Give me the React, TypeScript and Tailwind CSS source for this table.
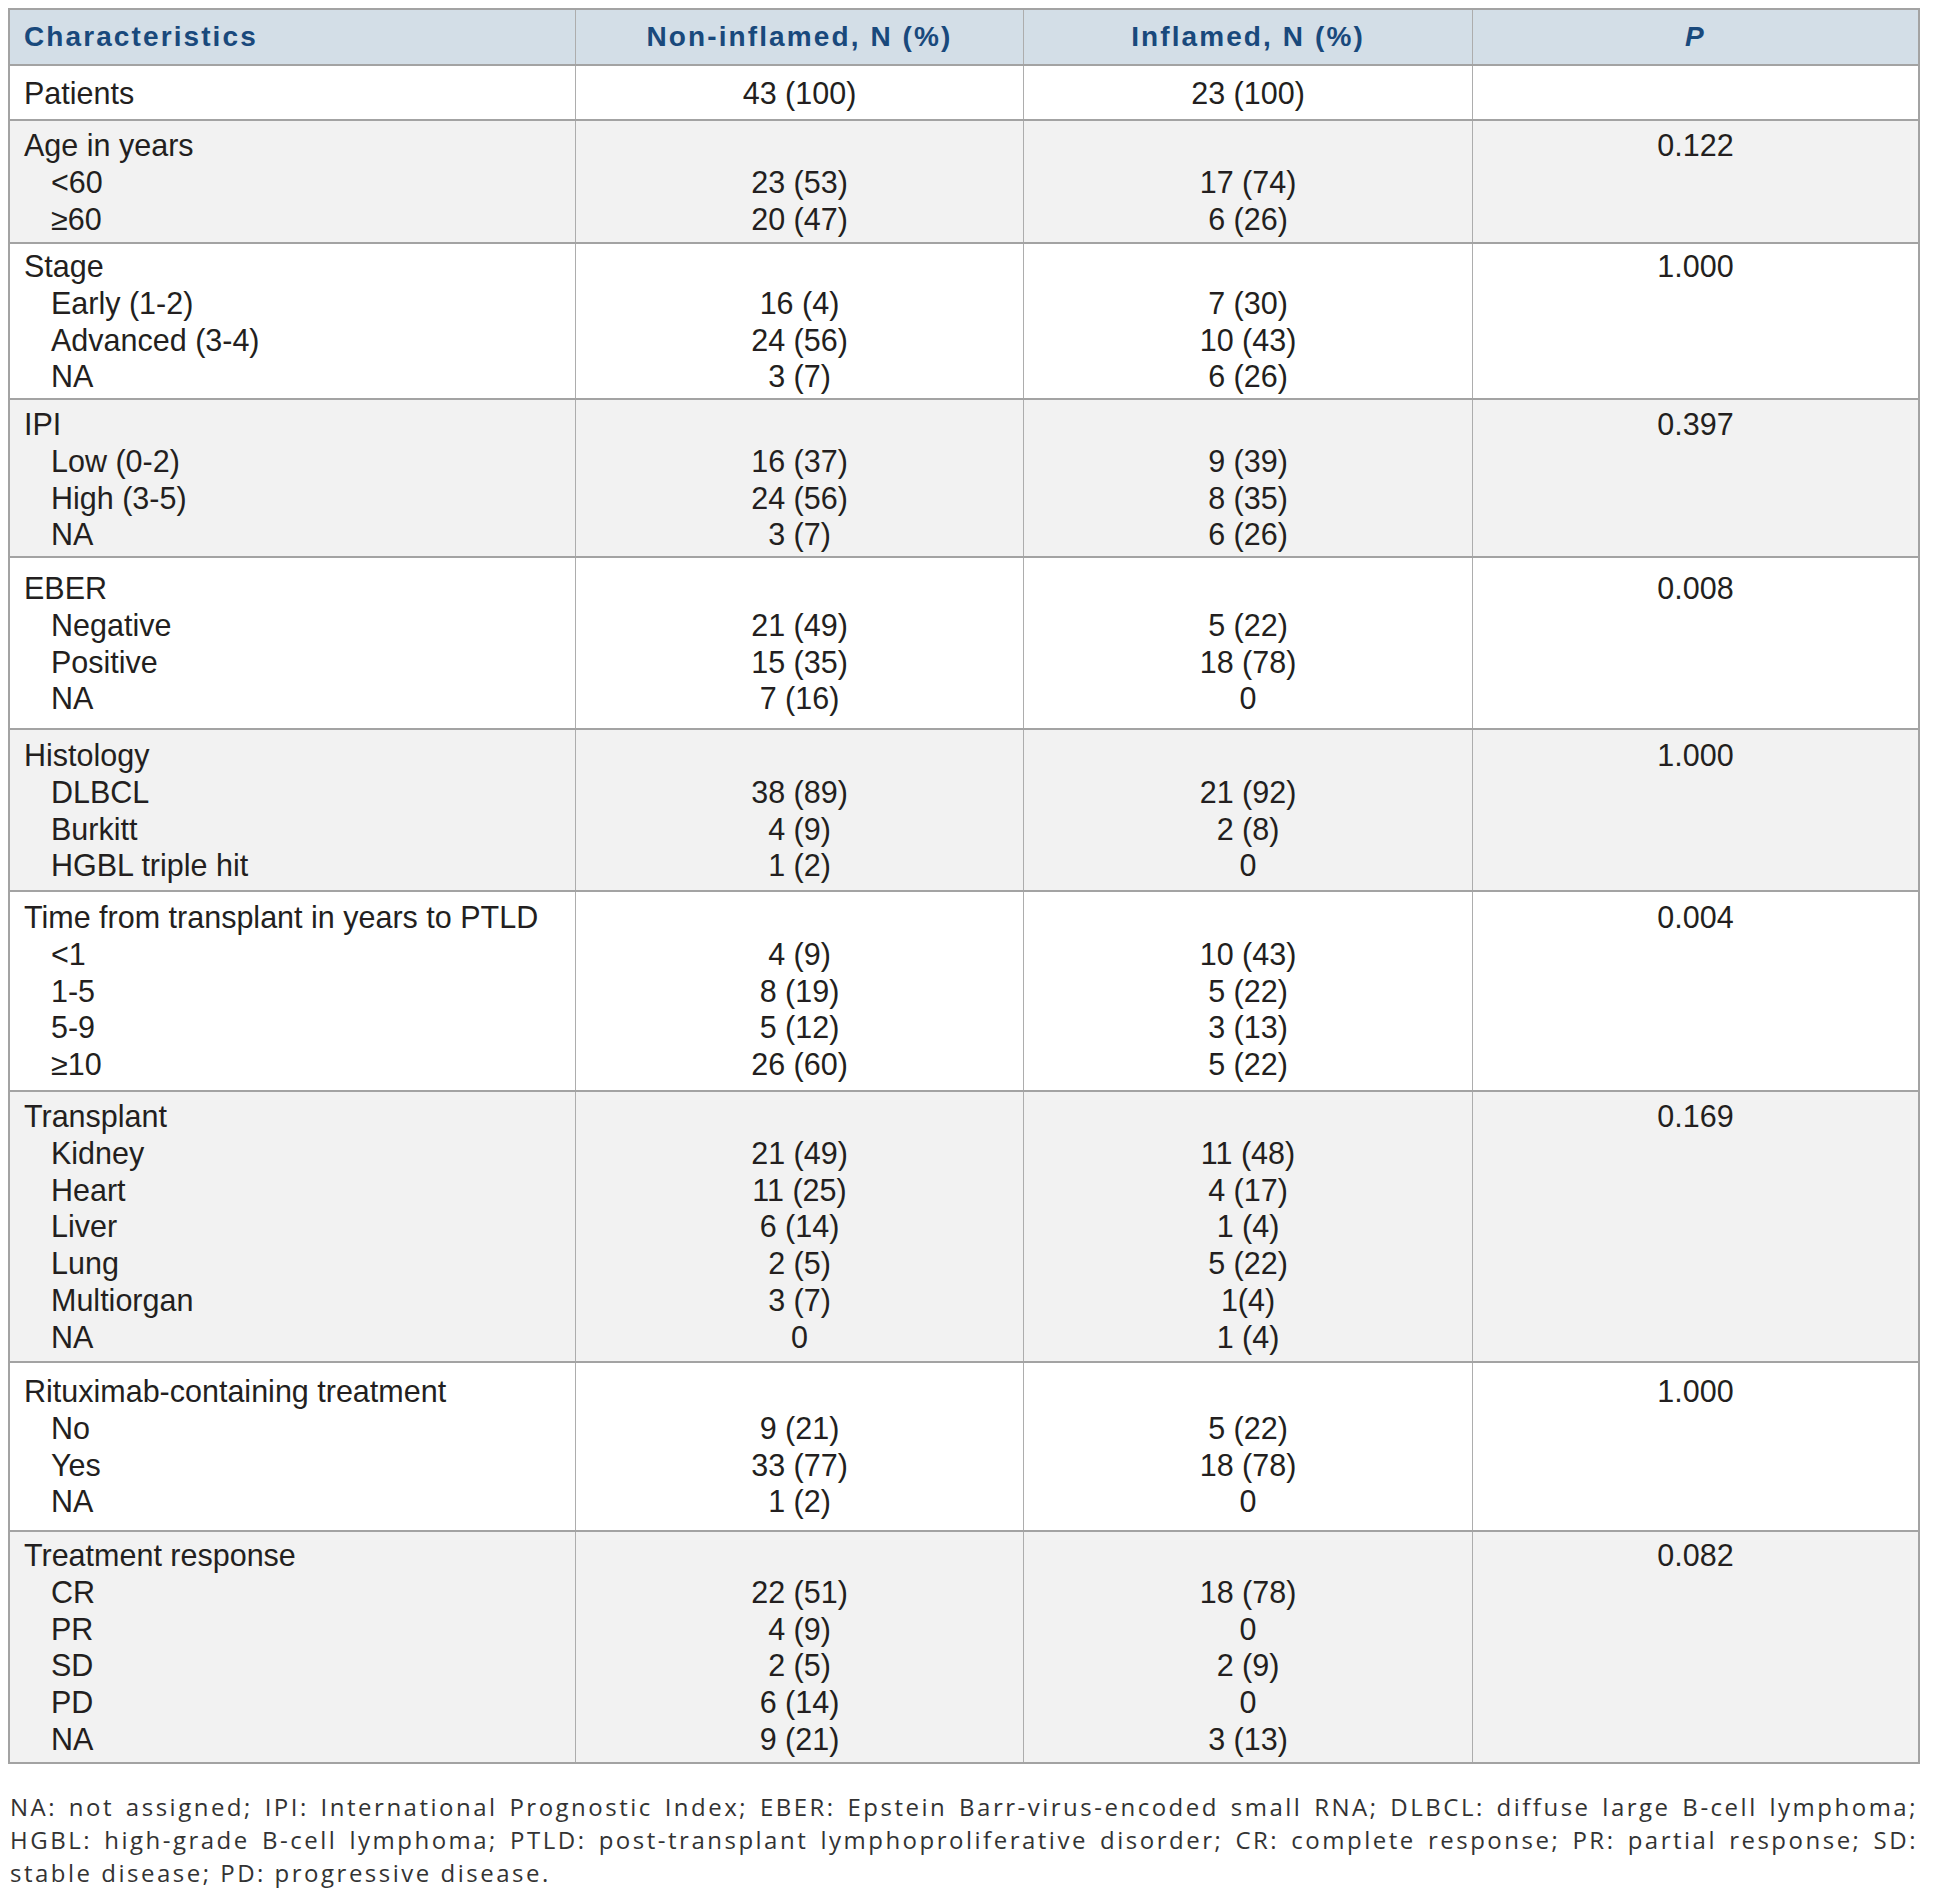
import React from 'react';

type Row = {
  label: string;
  subs: string[];
  a: string[];
  b: string[];
  p: string;
  h: number;
  pt: number;
};

const rows: Row[] = [
  { label: 'Patients', subs: [], a: ['43 (100)'], b: ['23 (100)'], p: '', h: 55, pt: 9 },
  { label: 'Age in years', subs: ['<60', '≥60'], a: ['23 (53)', '20 (47)'], b: ['17 (74)', '6 (26)'], p: '0.122', h: 123, pt: 6 },
  { label: 'Stage', subs: ['Early (1-2)', 'Advanced (3-4)', 'NA'], a: ['16 (4)', '24 (56)', '3 (7)'], b: ['7 (30)', '10 (43)', '6 (26)'], p: '1.000', h: 156, pt: 4 },
  { label: 'IPI', subs: ['Low (0-2)', 'High (3-5)', 'NA'], a: ['16 (37)', '24 (56)', '3 (7)'], b: ['9 (39)', '8 (35)', '6 (26)'], p: '0.397', h: 158, pt: 6 },
  { label: 'EBER', subs: ['Negative', 'Positive', 'NA'], a: ['21 (49)', '15 (35)', '7 (16)'], b: ['5 (22)', '18 (78)', '0'], p: '0.008', h: 172, pt: 12 },
  { label: 'Histology', subs: ['DLBCL', 'Burkitt', 'HGBL triple hit'], a: ['38 (89)', '4 (9)', '1 (2)'], b: ['21 (92)', '2 (8)', '0'], p: '1.000', h: 162, pt: 7 },
  {
    label: 'Time from transplant in years to PTLD',
    subs: ['<1', '1-5', '5-9', '≥10'],
    a: ['4 (9)', '8 (19)', '5 (12)', '26 (60)'],
    b: ['10 (43)', '5 (22)', '3 (13)', '5 (22)'],
    p: '0.004',
    h: 200,
    pt: 7,
  },
  {
    label: 'Transplant',
    subs: ['Kidney', 'Heart', 'Liver', 'Lung', 'Multiorgan', 'NA'],
    a: ['21 (49)', '11 (25)', '6 (14)', '2 (5)', '3 (7)', '0'],
    b: ['11 (48)', '4 (17)', '1 (4)', '5 (22)', '1(4)', '1 (4)'],
    p: '0.169',
    h: 271,
    pt: 6,
  },
  { label: 'Rituximab-containing treatment', subs: ['No', 'Yes', 'NA'], a: ['9 (21)', '33 (77)', '1 (2)'], b: ['5 (22)', '18 (78)', '0'], p: '1.000', h: 169, pt: 10 },
  {
    label: 'Treatment response',
    subs: ['CR', 'PR', 'SD', 'PD', 'NA'],
    a: ['22 (51)', '4 (9)', '2 (5)', '6 (14)', '9 (21)'],
    b: ['18 (78)', '0', '2 (9)', '0', '3 (13)'],
    p: '0.082',
    h: 230,
    pt: 5,
  },
];

const grid = 'grid grid-cols-[565px_448px_449px_1fr]';

export default function App() {
  return (
    <div className="min-h-screen bg-white pt-[8px] pl-[8px]">
      {/* table */}
      <div className="w-[1912px] border-2 border-[#a3a3a3] font-[family-name:Liberation_Sans,Arial,sans-serif]">
        {/* header */}
        <div className={`${grid} h-[56px] border-b-2 border-[#a3a3a3] bg-[#d3dee7] text-[28px] font-bold tracking-[2.1px] text-[#19497c]`}>
          <div className="flex items-center pl-[14px]">Characteristics</div>
          <div className="flex items-center justify-center border-l border-[#adadad]">Non-inflamed, N (%)</div>
          <div className="flex items-center justify-center border-l border-[#adadad]">Inflamed, N (%)</div>
          <div className="flex items-center justify-center border-l border-[#adadad] italic">P</div>
        </div>

        {rows.map((r, i) => {
          const hasSubs = r.subs.length > 0;
          return (
            <div
              key={r.label}
              style={{ height: r.h }}
              className={`${grid} text-[30.5px] leading-[36.75px] text-[#231f20] ${
                i < rows.length - 1 ? 'border-b-2 border-[#a3a3a3]' : ''
              } ${i % 2 === 1 ? 'bg-[#f2f2f2]' : 'bg-white'}`}
            >
              <div className="pl-[14px]" style={{ paddingTop: r.pt }}>
                <div>{r.label}</div>
                {r.subs.map((s) => (
                  <div key={s} className="pl-[27px]">
                    {s}
                  </div>
                ))}
              </div>
              <div className="border-l border-[#adadad] text-center" style={{ paddingTop: r.pt }}>
                {hasSubs && <div>&nbsp;</div>}
                {r.a.map((v, k) => (
                  <div key={k}>{v}</div>
                ))}
              </div>
              <div className="border-l border-[#adadad] text-center" style={{ paddingTop: r.pt }}>
                {hasSubs && <div>&nbsp;</div>}
                {r.b.map((v, k) => (
                  <div key={k}>{v}</div>
                ))}
              </div>
              <div className="border-l border-[#adadad] text-center" style={{ paddingTop: r.pt }}>
                {r.p}
              </div>
            </div>
          );
        })}
      </div>

      {/* footnote */}
      <div className="mt-[26px] w-[1910px] pl-[2px] font-[family-name:Open_Sans,sans-serif] text-[24px] leading-[33px] tracking-[2.5px] text-[#333333]">
        <div className="whitespace-nowrap [text-align-last:justify]">
          NA: not assigned; IPI: International Prognostic Index; EBER: Epstein Barr-virus-encoded small RNA; DLBCL: diffuse large B-cell lymphoma;
        </div>
        <div className="whitespace-nowrap [text-align-last:justify]">
          HGBL: high-grade B-cell lymphoma; PTLD: post-transplant lymphoproliferative disorder; CR: complete response; PR: partial response; SD:
        </div>
        <div>stable disease; PD: progressive disease.</div>
      </div>
    </div>
  );
}
